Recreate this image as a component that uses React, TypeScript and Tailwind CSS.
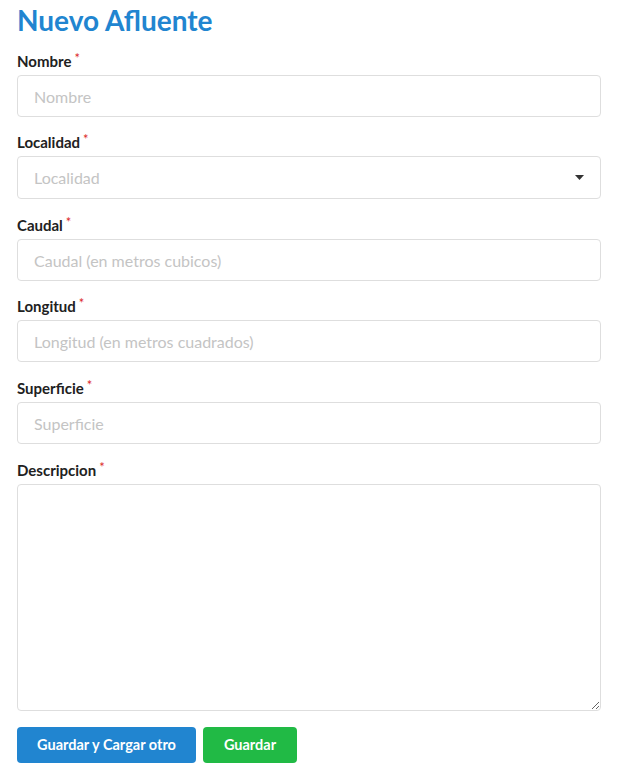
import { ReactNode } from "react";

const Label = ({ children }: { children: ReactNode }) => (
  <label className="mb-[4px] block h-[20px] text-[15px] font-bold leading-[20px] text-[#212121]">
    {children}
    <span className="relative top-[-4px] ml-[3px] text-[13px] font-normal text-[#db2828]">*</span>
  </label>
);

const inputClass =
  "block w-full rounded-[4px] border border-[#dedede] bg-white px-[16px] text-[16px] text-[#212121] outline-none placeholder:text-[#c4c4c4]";

const App = () => {
  return (
    <div className="min-h-screen bg-white px-[17px] pt-[2px] font-['Lato','Liberation_Sans',sans-serif]">
      <h1 className="mb-[13px] h-[36px] text-[28px] font-bold leading-[36px] text-[#2185d0]">
        Nuevo Afluente
      </h1>
      <form className="w-[584px]">
        {/* Nombre */}
        <div className="mb-[15px]">
          <Label>Nombre</Label>
          <input type="text" placeholder="Nombre" className={`${inputClass} h-[42px]`} />
        </div>
        {/* Localidad */}
        <div className="mb-[16px]">
          <Label>Localidad</Label>
          <div className="flex h-[43px] w-full items-center justify-between rounded-[4px] border border-[#dedede] bg-white pl-[16px] pr-[16px]">
            <span className="text-[16px] text-[#c4c4c4]">Localidad</span>
            <svg width="9" height="5" viewBox="0 0 9 5">
              <path d="M0 0 L9 0 L4.5 5 Z" fill="#333" />
            </svg>
          </div>
        </div>
        {/* Caudal */}
        <div className="mb-[15px]">
          <Label>Caudal</Label>
          <input
            type="text"
            placeholder="Caudal (en metros cubicos)"
            className={`${inputClass} h-[42px]`}
          />
        </div>
        {/* Longitud */}
        <div className="mb-[16px]">
          <Label>Longitud</Label>
          <input
            type="text"
            placeholder="Longitud (en metros cuadrados)"
            className={`${inputClass} h-[42px]`}
          />
        </div>
        {/* Superficie */}
        <div className="mb-[16px]">
          <Label>Superficie</Label>
          <input type="text" placeholder="Superficie" className={`${inputClass} h-[42px]`} />
        </div>
        {/* Descripcion */}
        <div className="mb-[16px]">
          <Label>Descripcion</Label>
          <textarea className={`${inputClass} h-[227px] py-[10px]`} />
        </div>
        <div className="flex gap-[7px]">
          <button
            type="button"
            className="h-[36px] w-[179px] rounded-[4px] bg-[#2185d0] text-[14.5px] font-bold text-white"
          >
            Guardar y Cargar otro
          </button>
          <button
            type="submit"
            className="h-[36px] w-[94px] rounded-[4px] bg-[#21ba45] text-[14.5px] font-bold text-white"
          >
            Guardar
          </button>
        </div>
      </form>
    </div>
  );
};

export default App;
